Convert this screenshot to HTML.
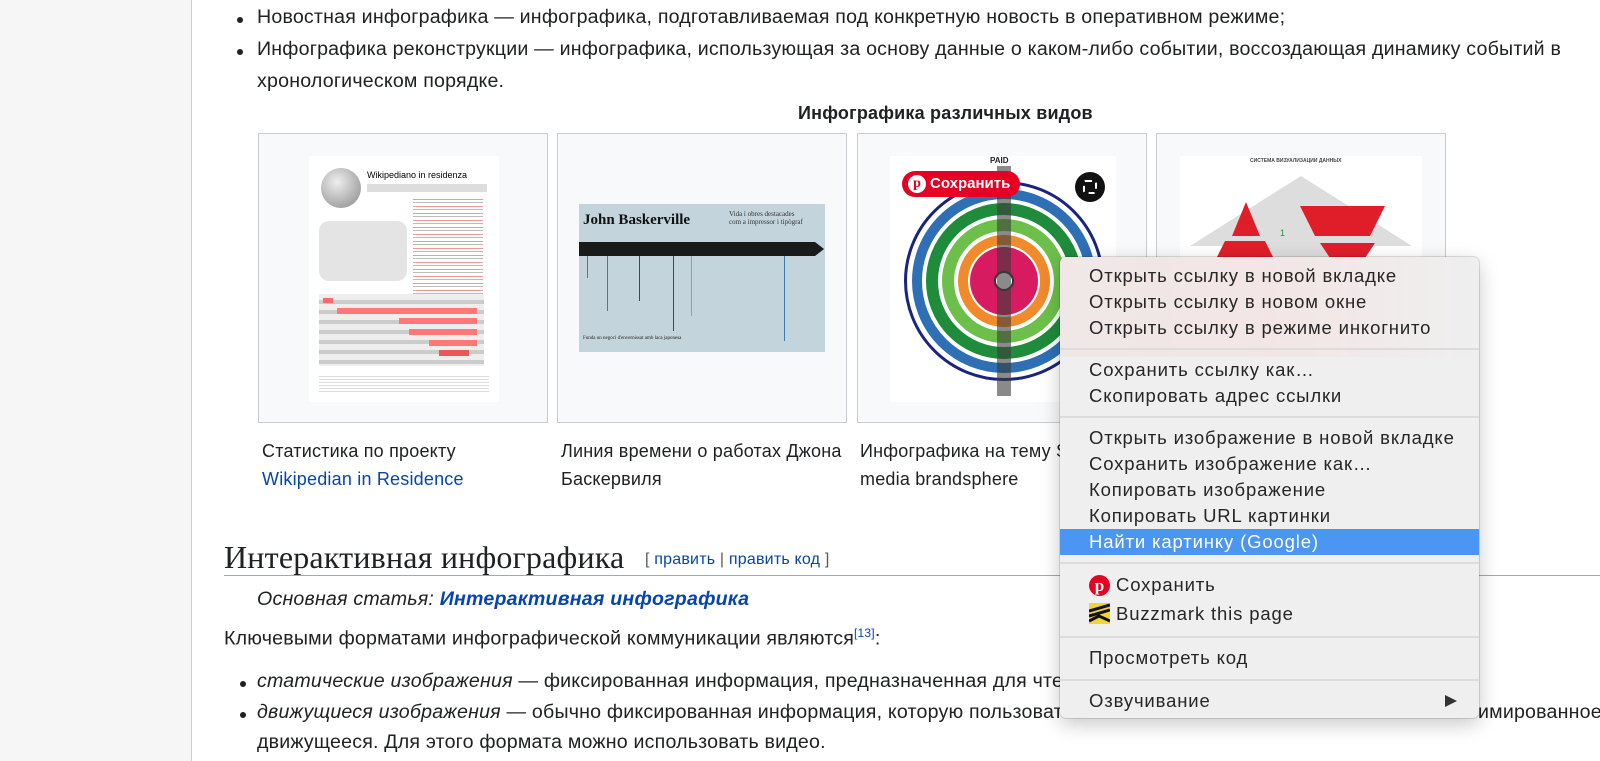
<!DOCTYPE html>
<html><head><meta charset="utf-8">
<style>
*{margin:0;padding:0;box-sizing:border-box}
body{width:1600px;height:761px;overflow:hidden;background:#fff;position:relative;font-family:"Liberation Sans","Noto Sans CJK SC",sans-serif;color:#202122}
.side{position:absolute;left:0;top:0;width:192px;height:761px;background:#f6f6f6;border-right:1px solid #a7d7f9}
.t{position:absolute;font-size:19.6px;white-space:nowrap;letter-spacing:0.2px}
.b{position:absolute;width:6px;height:6px;border-radius:50%;background:#202122}
.box{position:absolute;top:133px;width:290px;height:290px;background:#f8f9fa;border:1px solid #c8ccd1}
a{color:#0645ad;text-decoration:none}
.menu{position:absolute;left:1060px;top:257px;width:419px;height:461px;background:#efefef;border-radius:6px;box-shadow:0 6px 20px rgba(0,0,0,.22),0 0 0 1px rgba(0,0,0,.12);overflow:hidden}
.mi{position:absolute;left:29px;font-size:18.5px;letter-spacing:0.85px;color:#262626;white-space:nowrap;line-height:22px}
.sep{position:absolute;left:0;width:100%;height:2px;background:#dcdcdc}
</style></head><body>
<div class="side"></div>

<div class="b" style="left:237px;top:17px"></div>
<div class="t" style="left:257px;top:6px">Новостная инфографика — инфографика, подготавливаемая под конкретную новость в оперативном режиме;</div>
<div class="b" style="left:237px;top:49px"></div>
<div class="t" style="left:257px;top:38px">Инфографика реконструкции — инфографика, использующая за основу данные о каком-либо событии, воссоздающая динамику событий в</div>
<div class="t" style="left:257px;top:70px">хронологическом порядке.</div>

<div class="t" style="left:798px;top:103px;font-weight:bold;font-size:18px">Инфографика различных видов</div>

<!-- box 1 -->
<div class="box" style="left:258px">
  <div style="position:absolute;left:50px;top:22px;width:190px;height:246px;background:#fff">
    <div style="position:absolute;left:12px;top:12px;width:40px;height:40px;border-radius:50%;background:radial-gradient(circle at 40% 35%,#eee,#888)"></div>
    <div style="position:absolute;left:58px;top:14px;font-size:9px;color:#000">Wikipediano in residenza</div>
    <div style="position:absolute;left:58px;top:28px;width:120px;height:8px;background:#ddd"></div>
    <div style="position:absolute;left:104px;top:40px;width:70px;height:100px;background:repeating-linear-gradient(#fff 0 3px,#e99 3px 4px,#fff 4px 6px,#bbb 6px 7px)"></div>
    <div style="position:absolute;left:10px;top:65px;width:88px;height:60px;background:#e4e4e4;border-radius:10px"></div>
    <div style="position:absolute;left:10px;top:138px;width:165px;height:72px;background:repeating-linear-gradient(#eee 0 6px,#ccc 6px 10px)"></div>
    <div style="position:absolute;left:14px;top:142px;width:10px;height:5px;background:#f66"></div>
    <div style="position:absolute;left:28px;top:152px;width:140px;height:6px;background:#f77"></div>
    <div style="position:absolute;left:90px;top:162px;width:78px;height:6px;background:#f77"></div>
    <div style="position:absolute;left:100px;top:173px;width:68px;height:6px;background:#f77"></div>
    <div style="position:absolute;left:120px;top:184px;width:48px;height:6px;background:#f77"></div>
    <div style="position:absolute;left:130px;top:194px;width:30px;height:6px;background:#e55"></div>
    <div style="position:absolute;left:10px;top:218px;width:170px;height:20px;background:repeating-linear-gradient(#fff 0 2px,#ddd 2px 3px)"></div>
  </div>
</div>
<!-- box 2 -->
<div class="box" style="left:557px">
  <div style="position:absolute;left:21px;top:70px;width:246px;height:148px;background:#c3d4dd;overflow:hidden">
    <div style="position:absolute;left:4px;top:8px;font:bold 15px 'Liberation Serif',serif;color:#111">John Baskerville</div>
    <div style="position:absolute;left:150px;top:6px;font:7px 'Liberation Serif',serif;color:#333">Vida i obres destacades<br>com a impressor i tipògraf</div>
    <div style="position:absolute;left:0;top:38px;width:236px;height:14px;background:#1a1a1a"></div>
    <div style="position:absolute;left:236px;top:38px;border-left:9px solid #1a1a1a;border-top:7px solid transparent;border-bottom:7px solid transparent"></div>
    <div style="position:absolute;left:8px;top:52px;width:1px;height:22px;background:#3b7fb0"></div>
    <div style="position:absolute;left:28px;top:52px;width:1px;height:55px;background:#3b7fb0"></div>
    <div style="position:absolute;left:60px;top:52px;width:1px;height:45px;background:#a0a"></div>
    <div style="position:absolute;left:94px;top:52px;width:1px;height:75px;background:#a0a"></div>
    <div style="position:absolute;left:112px;top:52px;width:1px;height:60px;background:#8b3"></div>
    <div style="position:absolute;left:205px;top:52px;width:1px;height:85px;background:#3b7fb0"></div>
    <div style="position:absolute;left:4px;top:132px;font:5px 'Liberation Serif',serif">Funda un negoci d'envernissat amb laca japonesa</div>
  </div>
</div>
<!-- box 3 -->
<div class="box" style="left:857px">
  <div style="position:absolute;left:32px;top:22px;width:226px;height:246px;background:#fff;overflow:hidden">
    <div style="position:absolute;left:14px;top:25px;width:200px;height:200px;border-radius:50%;border:3px solid #1a237e"></div>
    <div style="position:absolute;left:22px;top:33px;width:184px;height:184px;border-radius:50%;border:10px solid #2e6fb5"></div>
    <div style="position:absolute;left:36px;top:47px;width:156px;height:156px;border-radius:50%;border:12px solid #1e8c3a"></div>
    <div style="position:absolute;left:52px;top:63px;width:124px;height:124px;border-radius:50%;border:12px solid #6cc04a"></div>
    <div style="position:absolute;left:68px;top:79px;width:92px;height:92px;border-radius:50%;border:10px solid #f08a2a"></div>
    <div style="position:absolute;left:80px;top:91px;width:68px;height:68px;border-radius:50%;background:#d81b60"></div>
    <div style="position:absolute;left:104px;top:115px;width:20px;height:20px;border-radius:50%;background:#fff;border:2px solid #333"></div>
    <div style="position:absolute;left:107px;top:10px;width:14px;height:230px;background:rgba(60,60,60,.6)"></div>
    <div style="position:absolute;left:100px;top:0;font:bold 8px sans-serif">PAID</div>
  </div>
  <div style="position:absolute;left:44px;top:37px;width:118px;height:26px;border-radius:13px;background:#e60023;color:#fff;font-weight:bold;font-size:15px;line-height:26px;padding-left:28px">Сохранить</div>
  <div style="position:absolute;left:50px;top:41px;width:18px;height:18px;border-radius:50%;background:#fff;color:#e60023;font:bold 14px/18px 'Liberation Serif',serif;text-align:center">p</div>
  <div style="position:absolute;left:217px;top:38px;width:30px;height:30px;border-radius:50%;background:#111"></div>
  <div style="position:absolute;left:225px;top:46px;width:14px;height:14px;border:2px dashed #fff;border-radius:3px"></div>
</div>
<!-- box 4 -->
<div class="box" style="left:1156px">
  <div style="position:absolute;left:23px;top:22px;width:242px;height:246px;background:#fff;overflow:hidden">
    <div style="position:absolute;left:70px;top:2px;font:bold 5px sans-serif;color:#444">СИСТЕМА ВИЗУАЛИЗАЦИИ ДАННЫХ</div>
    <svg width="242" height="246" style="position:absolute;left:0;top:0">
      <polygon points="121,20 10,90 60,90 60,246 180,246 180,90 232,90" fill="#ddd"/>
      <polygon points="66,46 52,80 80,80" fill="#e01e2a"/>
      <polygon points="45,85 85,85 95,105 35,105" fill="#e01e2a"/>
      <polygon points="120,50 205,50 190,80 135,80" fill="#e01e2a"/>
      <polygon points="140,87 195,87 183,105 152,105" fill="#e01e2a"/>
      <text x="100" y="80" font-size="9" fill="#1a9c3e" font-family="Liberation Sans">1</text>
      <text x="119" y="108" font-size="9" fill="#222" font-family="Liberation Sans">2</text>
    </svg>
  </div>
</div>

<div class="t" style="left:262px;top:441px;font-size:18px">Статистика по проекту</div>
<div class="t" style="left:262px;top:469px;font-size:18px"><a>Wikipedian in Residence</a></div>
<div class="t" style="left:561px;top:441px;font-size:18px">Линия времени о работах Джона</div>
<div class="t" style="left:561px;top:469px;font-size:18px">Баскервиля</div>
<div class="t" style="left:860px;top:441px;font-size:18px">Инфографика на тему Social</div>
<div class="t" style="left:860px;top:469px;font-size:18px">media brandsphere</div>

<div class="t" style="left:224px;top:539px;font-family:'Liberation Serif',serif;font-size:32px">Интерактивная инфографика</div>
<div class="t" style="left:645px;top:551px;font-size:16px;color:#54595d">[ <a>править</a> | <a>править код</a> ]</div>
<div style="position:absolute;left:224px;top:575px;width:1376px;height:1px;background:#a2a9b1"></div>

<div class="t" style="left:257px;top:588px;font-style:italic">Основная статья: <a style="font-weight:bold">Интерактивная инфографика</a></div>
<div class="t" style="left:224px;top:626px">Ключевыми форматами инфографической коммуникации являются<sup style="font-size:12px;color:#0645ad">[13]</sup>:</div>
<div class="b" style="left:240px;top:681px"></div>
<div class="t" style="left:257px;top:670px"><i>статические изображения</i> — фиксированная информация, предназначенная для чтения и изучения</div>
<div class="b" style="left:240px;top:712px"></div>
<div class="t" style="left:257px;top:701px"><i>движущиеся изображения</i> — обычно фиксированная информация, которую пользователь</div>
<div class="t" style="left:1478px;top:701px">имированное</div>
<div class="t" style="left:257px;top:731px">движущееся. Для этого формата можно использовать видео.</div>

<div class="menu">
  <div style="position:absolute;left:0;top:0;width:100%;height:100px;background:linear-gradient(90deg,rgba(240,220,220,.4),rgba(255,200,200,.25),rgba(240,240,240,0))"></div>
  <div class="mi" style="top:8px">Открыть ссылку в новой вкладке</div>
  <div class="mi" style="top:34px">Открыть ссылку в новом окне</div>
  <div class="mi" style="top:60px">Открыть ссылку в режиме инкогнито</div>
  <div class="sep" style="top:91px"></div>
  <div class="mi" style="top:102px">Сохранить ссылку как…</div>
  <div class="mi" style="top:128px">Скопировать адрес ссылки</div>
  <div class="sep" style="top:159px"></div>
  <div class="mi" style="top:170px">Открыть изображение в новой вкладке</div>
  <div class="mi" style="top:196px">Сохранить изображение как…</div>
  <div class="mi" style="top:222px">Копировать изображение</div>
  <div class="mi" style="top:248px">Копировать URL картинки</div>
  <div style="position:absolute;left:0;top:272px;width:100%;height:26px;background:#4a96f2"></div>
  <div class="mi" style="top:274px;color:#fff">Найти картинку (Google)</div>
  <div class="sep" style="top:305px"></div>
  <div style="position:absolute;left:29px;top:318px;width:21px;height:21px;border-radius:50%;background:#e60023;color:#fff;font:bold 17px/21px 'Liberation Serif',serif;text-align:center">p</div>
  <div class="mi" style="top:317px;left:56px">Сохранить</div>
  <svg style="position:absolute;left:29px;top:346px" width="21" height="21"><rect width="21" height="21" fill="#f2d43a"/><path d="M0 8 L21 2 M0 13 L21 7 M0 18 L10 13 L21 18" stroke="#111" stroke-width="3" fill="none"/></svg>
  <div class="mi" style="top:346px;left:56px">Buzzmark this page</div>
  <div class="sep" style="top:379px"></div>
  <div class="mi" style="top:390px">Просмотреть код</div>
  <div class="sep" style="top:422px"></div>
  <div class="mi" style="top:433px">Озвучивание</div>
  <div style="position:absolute;left:385px;top:438px;border-left:12px solid #333;border-top:6px solid transparent;border-bottom:6px solid transparent"></div>
</div>
</body></html>
